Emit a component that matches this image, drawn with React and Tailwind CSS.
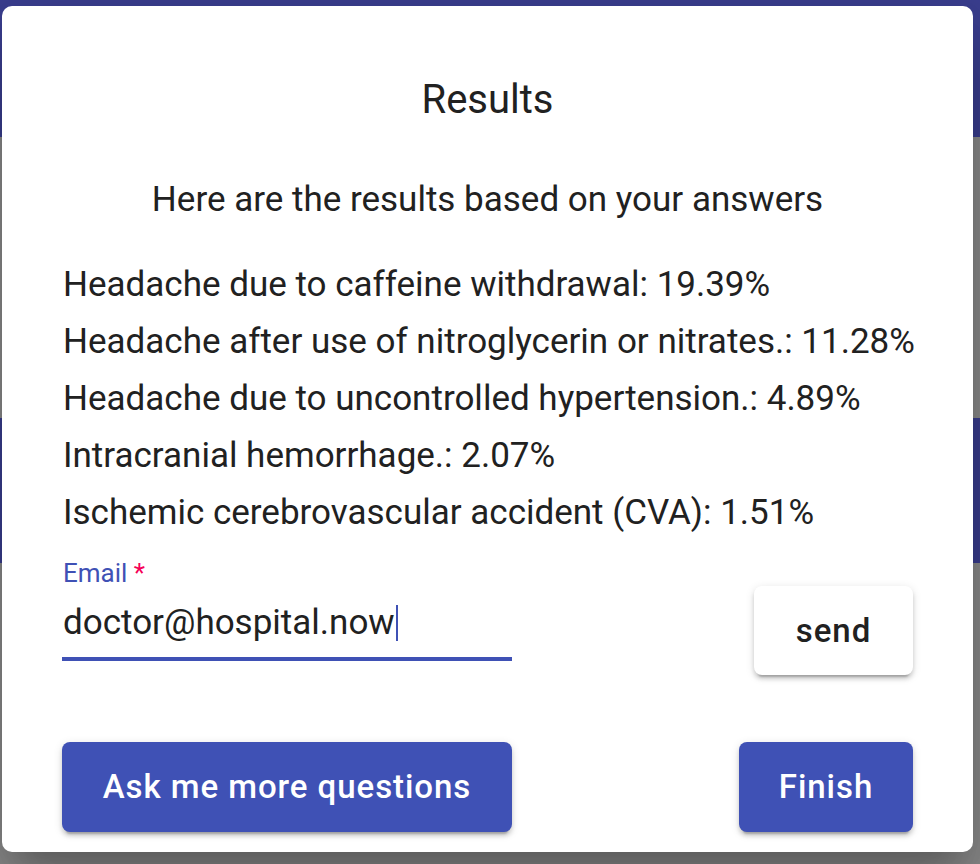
import React from "react";

const items = [
  "Headache due to caffeine withdrawal: 19.39%",
  "Headache after use of nitroglycerin or nitrates.: 11.28%",
  "Headache due to uncontrolled hypertension.: 4.89%",
  "Intracranial hemorrhage.: 2.07%",
  "Ischemic cerebrovascular accident (CVA): 1.51%",
];

export default function App() {
  return (
    <div
      className="relative h-[864px] w-[980px] overflow-hidden bg-[#8d8d8d]"
      style={{ fontFamily: "Roboto, 'Liberation Sans', sans-serif" }}
    >
      <div className="h-[137px] bg-[#3b3f91]" />
      <div className="h-[281px]" />
      <div className="h-[145px] bg-[#3b3f91]" />

      <div className="absolute left-[2px] top-[6px] flex h-[846px] w-[971px] flex-col rounded-[10px] bg-white px-[60px] text-[#212121] shadow-[0_22px_30px_-14px_rgba(0,0,0,0.2),0_48px_76px_6px_rgba(0,0,0,0.14),0_18px_92px_16px_rgba(0,0,0,0.12)]">
        <h2 className="pt-[70px] text-center text-[40px] leading-[48px] font-normal">
          Results
        </h2>
        <p className="mt-[52px] text-center text-[35px] leading-[48px]">
          Here are the results based on your answers
        </p>
        <div className="mt-[32px] flex flex-col pl-[1px]">
          {items.map((t) => (
            <div key={t} className="text-[35px] leading-[57px] whitespace-nowrap">
              {t}
            </div>
          ))}
        </div>

        <div className="mt-[18px] flex h-[102px] items-start justify-between">
          <div className="flex w-[450px] flex-col">
            <div className="pl-[1px] text-[26px] leading-[28px] text-[#3f51b5]">
              Email <span className="text-[#f50057]">*</span>
            </div>
            <div className="mt-[16px] flex items-center pl-[1px] text-[35px] leading-[40px]">
              <span>doctor@hospital.now</span>
              <span className="ml-[1px] inline-block h-[36px] w-[2px] bg-[#3f51b5]" />
            </div>
            <div className="mt-[14px] h-[4px] bg-[#3f51b5]" />
          </div>
          <button className="mt-[27px] flex h-[89px] w-[159px] shrink-0 items-center justify-center rounded-[8px] bg-white text-[33px] font-medium tracking-[0.02857em] text-[#212121] shadow-[0_6px_2px_-4px_rgba(0,0,0,0.2),0_4px_4px_0_rgba(0,0,0,0.14),0_2px_10px_0_rgba(0,0,0,0.12)]">
            send
          </button>
        </div>

        <div className="mt-[81px] flex items-start justify-between">
          <button className="flex h-[90px] w-[450px] items-center justify-center rounded-[8px] bg-[#3f51b5] text-[33px] font-medium tracking-[0.02857em] text-white shadow-[0_6px_2px_-4px_rgba(0,0,0,0.2),0_4px_4px_0_rgba(0,0,0,0.14),0_2px_10px_0_rgba(0,0,0,0.12)]">
            Ask me more questions
          </button>
          <button className="flex h-[90px] w-[174px] items-center justify-center rounded-[8px] bg-[#3f51b5] text-[33px] font-medium tracking-[0.02857em] text-white shadow-[0_6px_2px_-4px_rgba(0,0,0,0.2),0_4px_4px_0_rgba(0,0,0,0.14),0_2px_10px_0_rgba(0,0,0,0.12)]">
            Finish
          </button>
        </div>
      </div>
    </div>
  );
}
